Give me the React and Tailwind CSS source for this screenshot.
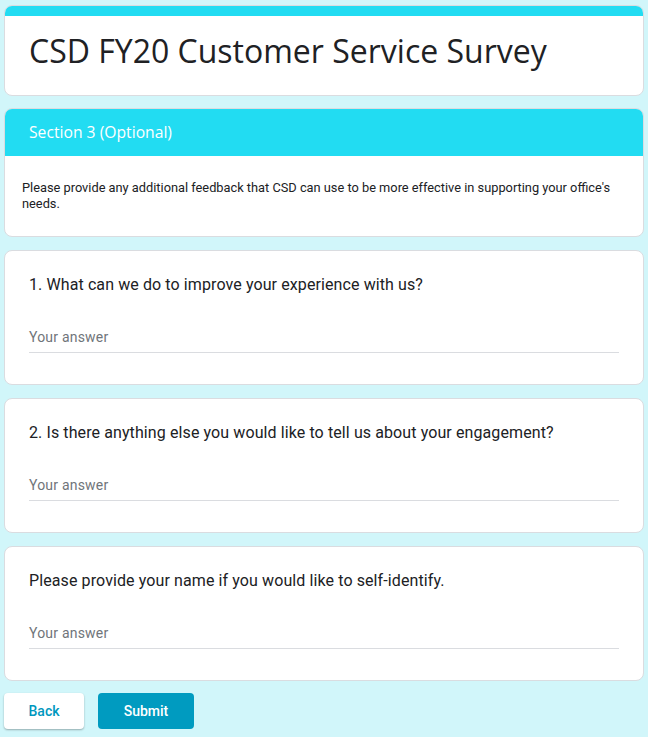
export default function App() {
  const questions = [
    "1. What can we do to improve your experience with us?",
    "2. Is there anything else you would like to tell us about your engagement?",
    "Please provide your name if you would like to self-identify.",
  ];
  return (
    <div className="min-h-[737px] bg-[#d1f6fa] pt-[5px] pb-2" style={{ fontFamily: "Roboto, 'Liberation Sans', sans-serif" }}>
      <div className="mx-auto w-[640px] flex flex-col gap-[13px]">
        <div className="rounded-lg border border-[#dadce0] bg-white overflow-hidden h-[91px]">
          <div className="h-[10px] bg-[#22dcf2]" />
          <div className="px-6 pt-[12px]">
            <h1 className="text-[32px] leading-[46px] text-[#202124]" style={{ fontFamily: "'Open Sans', Roboto, sans-serif" }}>
              CSD FY20 Customer Service Survey
            </h1>
          </div>
        </div>
        <div className="-mt-px rounded-lg border border-[#dadce0] bg-white overflow-hidden">
          <div className="h-[47px] bg-[#22dcf2] flex items-center px-6">
            <span className="text-[15.7px] text-white" style={{ fontFamily: "'Open Sans', Roboto, sans-serif" }}>
              Section 3 (Optional)
            </span>
          </div>
          <div className="pl-[17px] pr-[24px] pt-[24px] pb-[24px] text-[12.8px] leading-[16px] text-[#202124]">
            Please provide any additional feedback that CSD can use to be more effective in supporting your office's needs.
          </div>
        </div>
        {questions.map((q) => (
          <div key={q} className="rounded-lg border border-[#dadce0] bg-white px-6 pt-[22px] h-[135px]">
            <div className="text-[16px] leading-[24px] text-[#202124] tracking-[0.1px]">{q}</div>
            <div className="mt-[30px] w-[590px] border-b border-[#dadce0] pb-[5px] text-[14px] leading-[20px] tracking-[0.2px] text-[#70757a]">
              Your answer
            </div>
          </div>
        ))}
        <div className="-mt-px flex gap-[14px]">
          <button className="h-9 w-20 rounded bg-white text-[14px] font-medium text-[#0097be] shadow-[0_1px_2px_rgba(0,0,0,0.3)]">
            Back
          </button>
          <button className="h-9 w-24 rounded bg-[#009bc0] text-[14px] font-medium text-white">
            Submit
          </button>
        </div>
      </div>
    </div>
  );
}
